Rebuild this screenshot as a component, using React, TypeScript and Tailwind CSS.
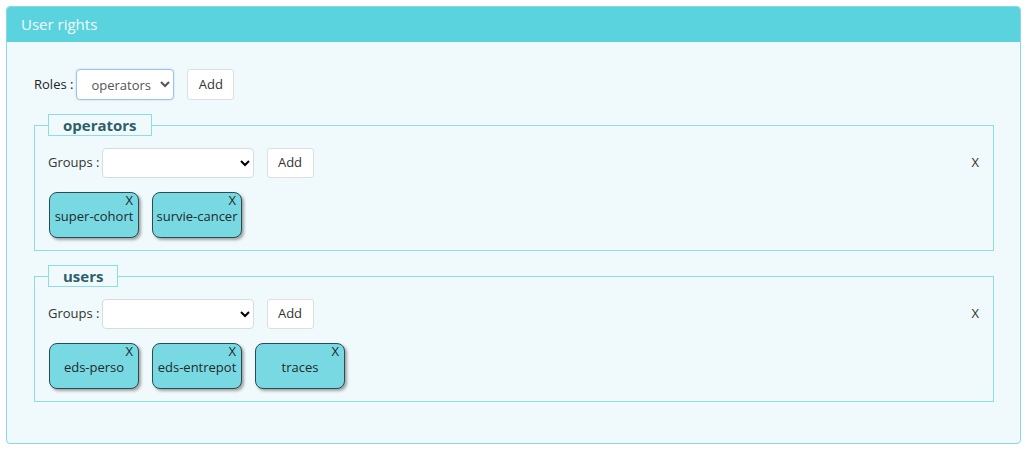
import React from "react";

const font = { fontFamily: '"Open Sans", "Noto Sans", sans-serif' };

function Chip({ label }: { label: string }) {
  return (
    <div className="flex h-[46px] w-[90px] flex-col rounded-[8px] border border-[#2e4a4c] bg-[#79d9e3] pt-[1px] text-[13px] text-[#1f2a2b] shadow-[2px_2px_3px_rgba(0,0,0,0.35)]">
      <span className="pr-[5px] text-right text-[13px] leading-[12px]">X</span>
      <span className="mt-[2px] text-center leading-[16px]">{label}</span>
    </div>
  );
}

function RoleSet({ name, chips }: { name: string; chips: string[] }) {
  return (
    <fieldset className="m-0 border border-[#8cdde6] px-[13px] pb-[12px] pt-[12px]">
      <legend className="ml-0 border border-[#8cdde6] px-[14px] text-[15px] font-bold leading-[20px] text-[#2d5e6b]">
        {name}
      </legend>
      <div className="flex items-center">
        <span className="text-[13px] text-[#333]">Groups :</span>
        <select className="ml-[2px] h-[30px] w-[152px] rounded-[4px] border border-[#d6dde0] bg-white text-[13px]" defaultValue="">
          <option value=""></option>
        </select>
        <button className="ml-[13px] h-[30px] w-[47px] rounded-[3px] border border-[#dcdfe0] bg-white text-[13px] text-[#333]">
          Add
        </button>
        <span className="ml-auto mr-[1px] text-[13px] text-[#333]">X</span>
      </div>
      <div className="mt-[14px] flex gap-[13px] pl-[1px]">
        {chips.map((c) => (
          <Chip key={c} label={c} />
        ))}
      </div>
    </fieldset>
  );
}

export default function App() {
  return (
    <div className="min-h-[452px] bg-white pl-[6px] pr-[3px] pt-[6px]" style={font}>
      <div className="h-[438px] rounded-[4px] border border-[#8ad8e2] bg-[#f0fafc]">
        <div className="flex h-[35px] items-center rounded-t-[3px] bg-[#5bd3df] pl-[14px] text-[15px] text-[#f2fcfd]">
          User rights
        </div>
        <div className="pl-[27px] pr-[26px] pt-[27px]">
          <div className="flex items-center">
            <span className="text-[13px] text-[#222]">Roles :</span>
            <select
              className="ml-[3px] h-[31px] w-[98px] rounded-[4px] border border-[#9cc3ea] bg-white pl-[10px] text-[13px] text-[#555] shadow-[0_0_2px_rgba(100,150,220,0.4)]"
              defaultValue="operators"
            >
              <option value="operators">operators</option>
              <option value="users">users</option>
            </select>
            <button className="ml-[13px] h-[31px] w-[47px] rounded-[3px] border border-[#dcdfe0] bg-white text-[13px] text-[#333]">
              Add
            </button>
          </div>
          <div className="mt-[14px] flex flex-col gap-[14px]">
            <RoleSet name="operators" chips={["super-cohort", "survie-cancer"]} />
            <RoleSet name="users" chips={["eds-perso", "eds-entrepot", "traces"]} />
          </div>
        </div>
      </div>
    </div>
  );
}
